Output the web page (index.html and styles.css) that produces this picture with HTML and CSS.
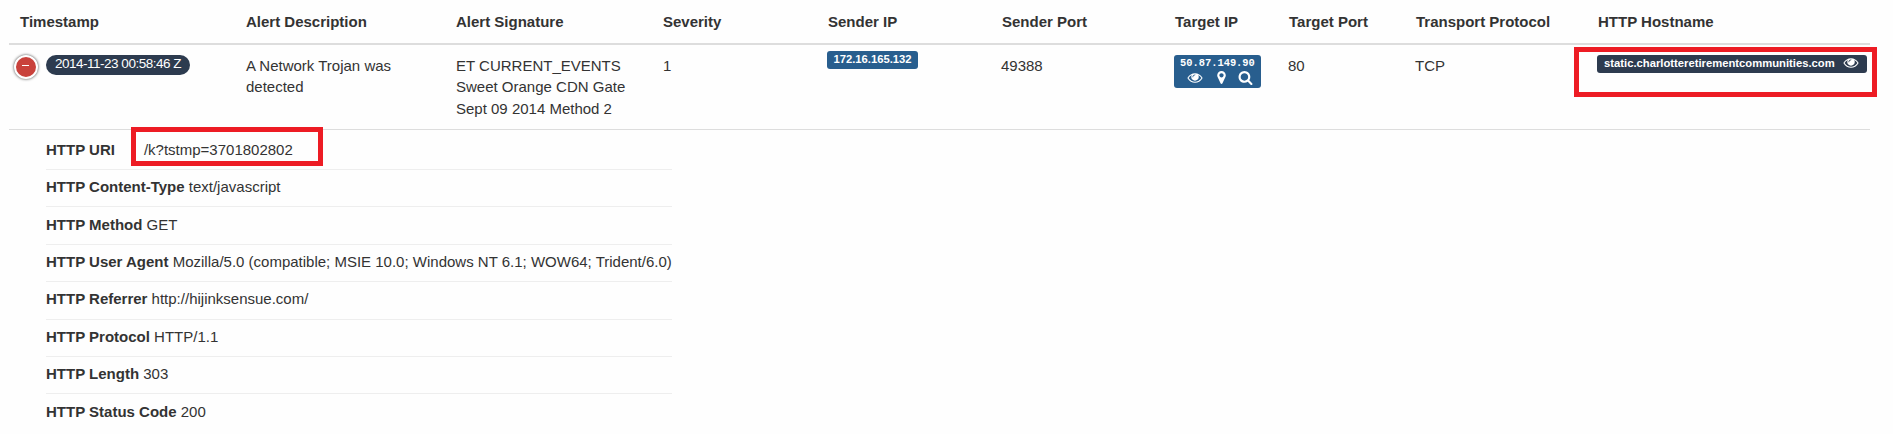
FILE: index.html
```
<!DOCTYPE html>
<html lang="en">
<head>
<meta charset="utf-8">
<title>Network alerts</title>
<link rel="stylesheet" href="styles.css">
</head>
<body>
<svg class="defs" aria-hidden="true">
  <symbol id="eye" viewBox="0 0 1792 1792"><path fill="currentColor" d="M1664 960q-152-236-381-353 61 104 61 225 0 185-131.500 316.500t-316.500 131.500-316.500-131.500-131.500-316.500q0-121 61-225-229 117-381 353 133 205 333.500 326.500t434.500 121.500 434.500-121.500 333.500-326.500zm-720-384q0-20-14-34t-34-14q-125 0-214.500 89.500t-89.500 214.500q0 20 14 34t34 14 34-14 14-34q0-86 61-147t147-61q20 0 34-14t14-34zm848 384q0 34-20 69-140 230-376.500 368.500t-499.500 138.500-499.500-139-376.500-368q-20-35-20-69t20-69q140-229 376.500-368t499.500-139 499.500 139 376.500 368q20 35 20 69z"/></symbol>
  <symbol id="pin" viewBox="0 0 1024 1792"><path fill="currentColor" d="M768 640q0-106-75-181t-181-75-181 75-75 181 75 181 181 75 181-75 75-181zm256 0q0 109-33 179l-364 774q-16 33-47.500 52t-67.500 19-67.500-19-46.500-52l-365-774q-33-70-33-179 0-212 150-362t362-150 362 150 150 362z"/></symbol>
  <symbol id="search" viewBox="0 0 1664 1792"><path fill="currentColor" d="M1152 832q0-185-131.500-316.500t-316.500-131.500-316.500 131.500-131.500 316.500 131.500 316.500 316.500 131.500 316.500-131.500 131.500-316.500zm512 832q0 52-38 90t-90 38q-54 0-90-38l-343-342q-179 124-399 124-143 0-273.500-55.500t-225-150-150-225-55.500-273.500 55.500-273.500 150-225 225-150 273.500-55.500 273.500 55.500 225 150 150 225 55.500 273.500q0 220-124 399l343 343q37 37 37 90z"/></symbol>
</svg>
<main class="alerts">
  <div class="row head">
    <span>Timestamp</span><span>Alert Description</span><span>Alert Signature</span><span>Severity</span><span>Sender IP</span><span>Sender Port</span><span>Target IP</span><span>Target Port</span><span>Transport Protocol</span><span>HTTP Hostname</span>
  </div>
  <div class="row body">
    <div class="stamp"><button class="toggle" aria-label="Collapse"></button><span class="pill">2014-11-23 00:58:46 Z</span></div>
    <div>A Network Trojan was detected</div>
    <div>ET CURRENT_EVENTS Sweet Orange CDN Gate Sept 09 2014 Method 2</div>
    <div>1</div>
    <div class="sender"><span class="label blue">172.16.165.132</span></div>
    <div class="nudge">49388</div>
    <div class="target"><span class="label blue stacked"><span class="mono">50.87.149.90</span><span class="icons"><svg class="i-eye"><use href="#eye"/></svg><svg class="i-pin"><use href="#pin"/></svg><svg class="i-search"><use href="#search"/></svg></span></span></div>
    <div class="nudge">80</div>
    <div class="nudge">TCP</div>
    <div class="host"><span class="label dark">static.charlotteretirementcommunities.com<svg class="i-eye"><use href="#eye"/></svg></span><i class="mark host-mark"></i></div>
  </div>
  <ul class="details">
    <li class="uri"><b>HTTP URI</b> <span class="uri-value">/k?tstmp=3701802802<i class="mark uri-mark"></i></span></li>
    <li><b>HTTP Content-Type</b> text/javascript</li>
    <li><b>HTTP Method</b> GET</li>
    <li><b>HTTP User Agent</b> Mozilla/5.0 (compatible; MSIE 10.0; Windows NT 6.1; WOW64; Trident/6.0)</li>
    <li><b>HTTP Referrer</b> http://hijinksensue.com/</li>
    <li><b>HTTP Protocol</b> HTTP/1.1</li>
    <li><b>HTTP Length</b> 303</li>
    <li><b>HTTP Status Code</b> 200</li>
  </ul>
</main>
</body>
</html>
```
FILE: styles.css
```
* { box-sizing: border-box; }
body {
  margin: 0;
  height: 434px;
  overflow: hidden;
  background: #fefefe;
  color: #333;
  font: 15px/21.43px "Liberation Sans", Arial, sans-serif;
}
.defs { display: none; }
.alerts { width: 1861px; margin-left: 9px; }
.row {
  display: grid;
  grid-template-columns: 226px 210px 207px 165px 174px 173px 114px 127px 182px 1fr;
  padding-left: 11px;
}
.head { height: 45px; padding-top: 11px; border-bottom: 2px solid #ddd; font-weight: bold; white-space: nowrap; }
.body { height: 85px; padding-top: 10px; border-bottom: 1px solid #ddd; }
.body > div { padding-right: 25px; }
.body > .nudge { margin-left: -1px; padding: 0; }
.stamp { display: flex; align-items: flex-start; margin-left: -4px; white-space: nowrap; }
.toggle {
  position: relative;
  flex: none;
  width: 24px;
  height: 24px;
  margin-left: -2px;
  padding: 0;
  border: 2px solid #fff;
  border-radius: 50%;
  background: #c9423c;
  box-shadow: 0 0 3px #444;
}
.toggle::before { content: ""; position: absolute; left: 6px; top: 8px; width: 7px; height: 1px; background: #fff; }
.pill {
  width: 144px;
  height: 20px;
  margin-left: 8px;
  border-radius: 10px;
  background: #2d3b4f;
  color: #fff;
  font-size: 13.5px;
  line-height: 17px;
  letter-spacing: -0.5px;
  text-align: center;
}
.label {
  display: flex;
  width: max-content;
  height: 18px;
  padding: 0 7px;
  border-radius: 3px;
  color: #fff;
  font-size: 11.25px;
  font-weight: bold;
  line-height: 17px;
  white-space: nowrap;
}
.blue { background: #285e8e; }
.dark { background: #2d3b4f; }
.sender { margin: -4px 0 0 -1px; }
.sender .label { width: 91px; padding: 0; justify-content: center; }
.target { margin-left: -1px; }
.body > .target, .body > .host { padding-right: 0; }
.stacked { display: block; width: 87px; height: 33px; padding: 0 6px; }
.mono { display: block; height: 15px; line-height: 16px; font-family: "Liberation Mono", monospace; font-size: 10.4px; }
.icons { display: flex; padding-left: 7px; }
.i-eye { width: 16px; height: 15px; }
.i-pin { width: 9px; height: 15px; margin-left: 14px; }
.i-search { width: 15px; height: 15px; margin-left: 12px; }
.host { position: relative; margin-left: -1px; }
.host .label { width: 270px; justify-content: space-between; padding-right: 8px; }
.mark { position: absolute; border: 5px solid #ed1c24; }
.host-mark { left: -23px; top: -8px; width: 303px; height: 50px; }
.details { width: max-content; margin: 2.4px 0 0 37px; padding: 0; list-style: none; white-space: nowrap; }
.details li { height: 37.43px; padding-top: 6.4px; border-bottom: 1px solid #eee; }
.details li:last-child { border-bottom: 0; }
.uri { display: flex; gap: 29px; }
.uri-value { position: relative; }
.uri-mark { left: -13px; top: -12px; width: 192px; height: 39px; }
```
